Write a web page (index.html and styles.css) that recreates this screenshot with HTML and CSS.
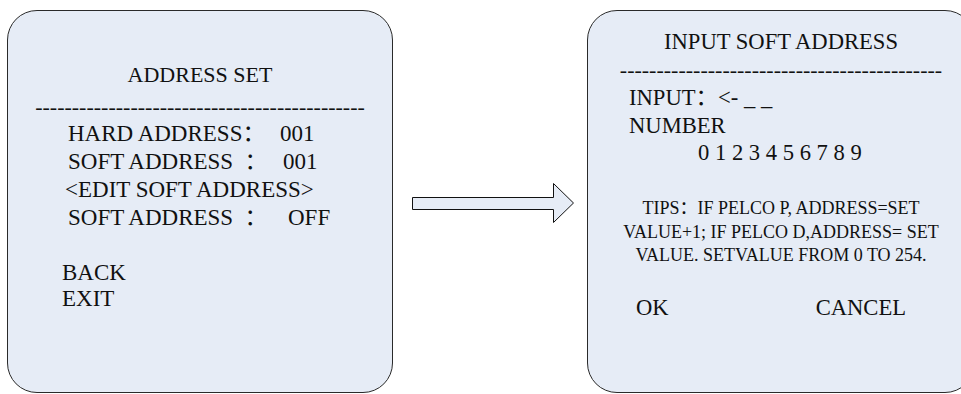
FILE: index.html
```html
<!DOCTYPE html>
<html>
<head>
<meta charset="utf-8">
<link rel="stylesheet" href="styles.css">
</head>
<body>
<div class="stage">
  <section class="panel panel-left">
    <div class="title">ADDRESS SET</div>
    <div class="dashes">---------------------------------------------</div>
    <div class="rows">
      <div class="row"><span class="lbl lbl-hard">HARD ADDRESS：</span><span class="val">001</span></div>
      <div class="row"><span class="lbl lbl-soft">SOFT ADDRESS  ：</span><span class="val">001</span></div>
      <div class="row row-edit">&lt;EDIT SOFT ADDRESS&gt;</div>
      <div class="row"><span class="lbl lbl-soft2">SOFT ADDRESS  ：</span><span class="val">OFF</span></div>
    </div>
    <div class="nav">
      <div class="nav-item">BACK</div>
      <div class="nav-item">EXIT</div>
    </div>
  </section>

  <svg class="arrow" width="163" height="41" viewBox="0 0 163 41">
    <path d="M0.5 14.5 H141.5 V0.5 L161.5 20 L141.5 39.5 V26.5 H0.5 Z" fill="#e6ecf6" stroke="#111" stroke-width="1"/>
  </svg>

  <section class="panel panel-right">
    <div class="title">INPUT SOFT ADDRESS</div>
    <div class="dashes">--------------------------------------------</div>
    <div class="input-block">
      <div class="line">INPUT：&lt;- _ _</div>
      <div class="line">NUMBER</div>
      <div class="line digits">0 1 2 3 4 5 6 7 8 9</div>
    </div>
    <div class="tips">
      <div>TIPS：IF PELCO P, ADDRESS=SET</div>
      <div>VALUE+1; IF PELCO D,ADDRESS= SET</div>
      <div>VALUE. SETVALUE FROM 0 TO 254.</div>
    </div>
    <div class="actions">
      <span class="btn btn-ok">OK</span>
      <span class="btn btn-cancel">CANCEL</span>
    </div>
  </section>
</div>
</body>
</html>
```

FILE: styles.css
```css
html, body {
  margin: 0;
  padding: 0;
  background: #ffffff;
  overflow: hidden;
}

body {
  width: 961px;
  height: 394px;
  font-family: "Liberation Serif", "Noto Sans CJK SC", serif;
  color: #111;
}

.stage {
  display: flex;
  align-items: flex-start;
  padding: 10px 0 0 7px;
  width: 1100px;
}

.panel {
  box-sizing: border-box;
  height: 383px;
  background: #e6ecf6;
  border: 1px solid #2a2a2a;
  border-radius: 30px;
  font-size: 22px;
  line-height: 28px;
  flex: none;
}

.panel-left {
  width: 386px;
  padding: 50px 0 0 0;
}

.panel-right {
  width: 388px;
  padding: 17px 0 0 0;
  margin-left: 12px;
  font-size: 22.6px;
}

.title {
  text-align: center;
}

.dashes {
  text-align: center;
  white-space: nowrap;
  overflow: hidden;
  font-size: 22px;
}

.panel-left .title { margin-bottom: 4px; }
.panel-left .dashes { margin-bottom: -1px; }

.rows {
  padding-left: 60px;
  font-size: 23px;
}

.row {
  display: flex;
  white-space: pre;
}

.row-edit {
  margin-left: -3px;
}

.lbl-hard { width: 212px; }
.lbl-soft { width: 215px; }
.lbl-soft2 { width: 220px; }

.nav {
  padding: 28px 0 0 54px;
  font-size: 23px;
}

.nav-item {
  line-height: 26px;
}

.arrow {
  flex: none;
  margin: 173px 0 0 19px;
}

.input-block {
  padding-left: 41px;
}

.digits {
  padding-left: 69px;
  line-height: 26px;
}

.tips {
  margin-top: 31px;
  font-size: 18px;
  line-height: 23.5px;
  text-align: center;
}

.actions {
  display: flex;
  padding: 26px 0 0 48px;
}

.btn-cancel {
  margin-left: 147px;
}
```
